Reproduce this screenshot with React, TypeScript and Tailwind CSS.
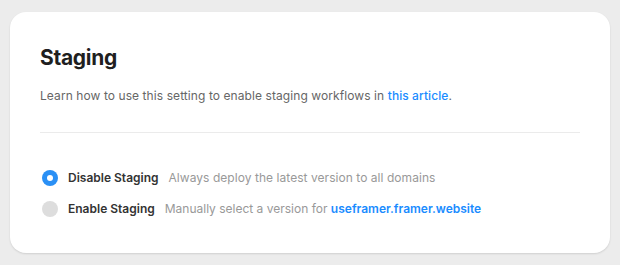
import React from "react";

export default function App() {
  return (
    <div className="w-[620px] h-[265px] bg-[#ececec] pt-[12px] px-[10px]" style={{ fontFamily: "Inter, 'Noto Sans', sans-serif" }}>
      <div className="w-[600px] h-[241px] bg-white rounded-[16px] shadow-[0_1px_2px_rgba(0,0,0,0.12)] px-[30px] pt-[32px]">
        <h1 className="text-[21px] leading-[28px] font-bold text-[#1f1f1f] tracking-[-0.3px]">Staging</h1>
        <p className="mt-[16px] text-[12px] leading-[16px] text-[#666] tracking-[0.08px]">
          Learn how to use this setting to enable staging workflows in{" "}
          <span className="text-[#1a8cff] font-medium">this article</span>.
        </p>
        <div className="mt-[28px] h-px bg-[#ebebeb]" />
        <div className="mt-[37px] flex flex-col gap-[15px]">
          <div className="flex items-center h-[16px]">
            <div className="ml-[2px] w-[16px] h-[16px] rounded-full bg-[#2a90f5] flex items-center justify-center">
              <div className="w-[6px] h-[6px] rounded-full bg-white" />
            </div>
            <span className="ml-[10px] text-[12px] font-semibold text-[#333]">Disable Staging</span>
            <span className="ml-[10px] text-[12px] text-[#999] tracking-[0.05px]">Always deploy the latest version to all domains</span>
          </div>
          <div className="flex items-center h-[16px]">
            <div className="ml-[2px] w-[16px] h-[16px] rounded-full bg-[#dddddd]" />
            <span className="ml-[10px] text-[12px] font-semibold text-[#333]">Enable Staging</span>
            <span className="ml-[10px] text-[12px] text-[#999]">
              Manually select a version for{" "}
              <span className="text-[#1a8cff] font-semibold">useframer.framer.website</span>
            </span>
          </div>
        </div>
      </div>
    </div>
  );
}
